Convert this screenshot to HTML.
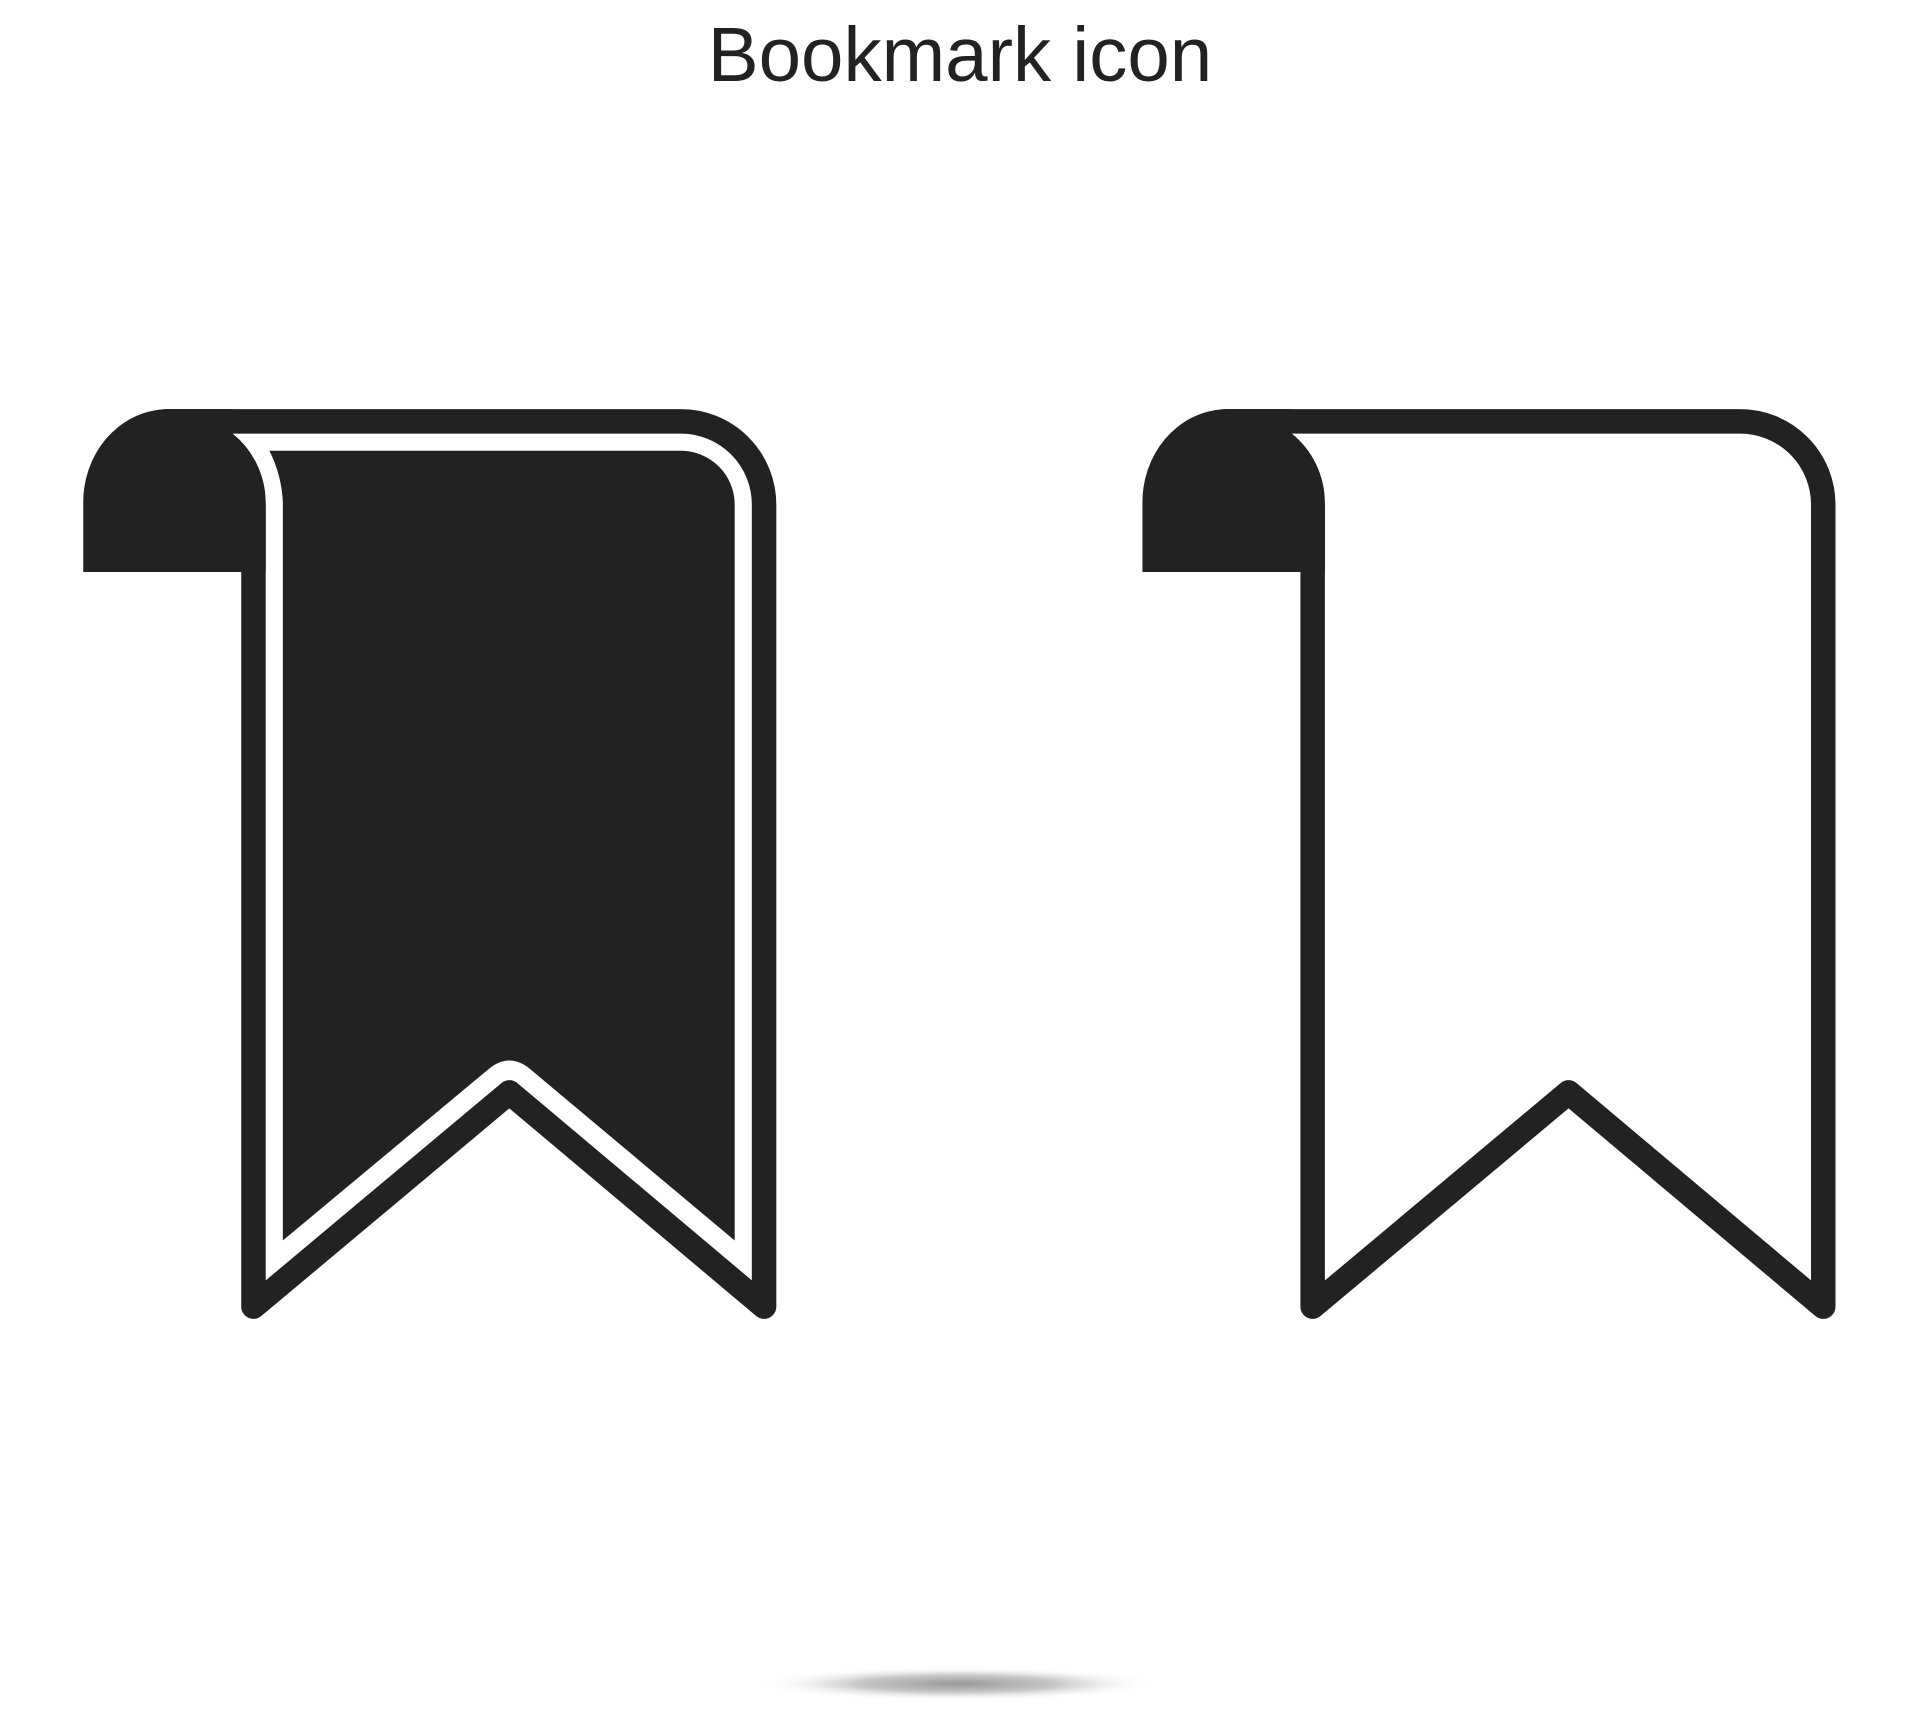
<!DOCTYPE html>
<html><head><meta charset="utf-8"><style>html,body{margin:0;padding:0;background:#fff}svg{display:block}</style></head>
<body>
<svg width="1920" height="1728" viewBox="0 0 1568 1411" xmlns="http://www.w3.org/2000/svg">
<defs>
<radialGradient id="sh" cx="0.5" cy="0.5" r="0.5">
<stop offset="0" stop-color="#999"/>
<stop offset="0.5" stop-color="#c8c8c8"/>
<stop offset="1" stop-color="#fff" stop-opacity="0"/>
</radialGradient>
<g id="frame">
<path d="M68 467 V412 A70 76 0 0 1 134 334 H190 V354 A70 72 0 0 1 217 410 V467 Z" fill="#222"/>
<path d="M136 344 H556 A68 68 0 0 1 624 412 V1067 L416 892 L207 1067 V412" fill="none" stroke="#222" stroke-width="20" stroke-linejoin="round" stroke-linecap="round"/>
</g>
</defs>
<text x="784" y="66" text-anchor="middle" font-family="Liberation Sans, Arial, sans-serif" font-size="63" fill="#222" textLength="412" lengthAdjust="spacingAndGlyphs">Bookmark icon</text>
<use href="#frame"/>
<path d="M220 368 H556 A44 44 0 0 1 600 412 V1013 L433 873 Q416 859 399 873 L231 1013 V410 Q230 388 220 368 Z" fill="#222"/>
<use href="#frame" transform="translate(865 0)"/>
<ellipse cx="782" cy="1375" rx="165" ry="14" fill="url(#sh)"/>
</svg>
</body></html>
